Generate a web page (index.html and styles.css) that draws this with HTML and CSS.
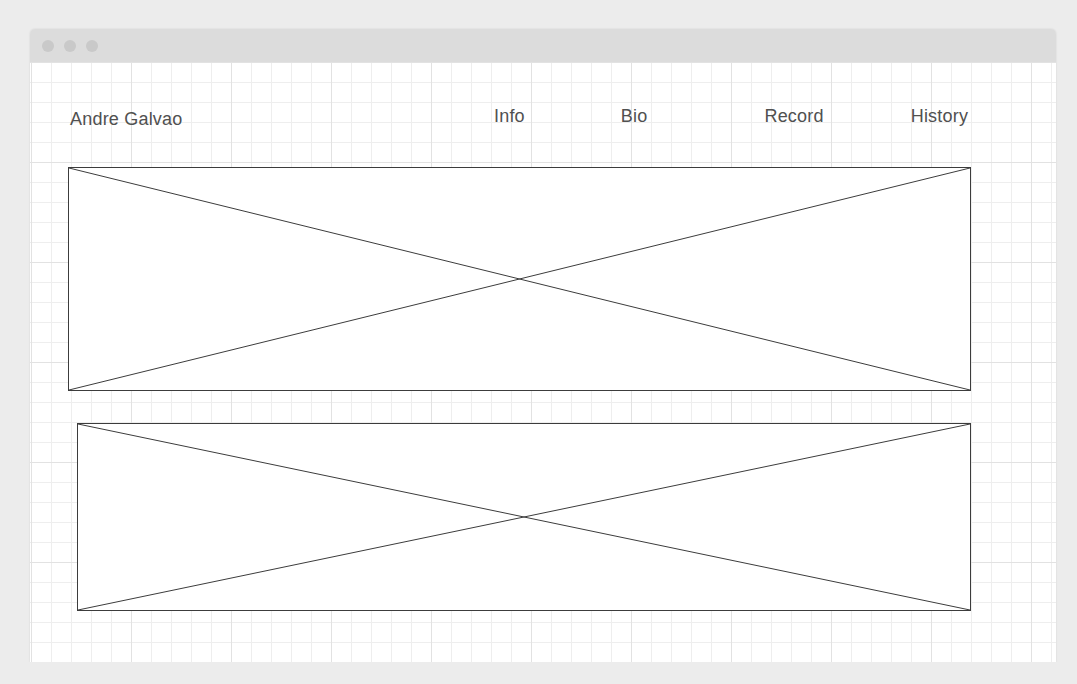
FILE: index.html
```html
<!DOCTYPE html>
<html lang="en">
<head>
    <meta charset="UTF-8">
    <meta name="viewport" content="width=device-width, initial-scale=1.0">
    <title>Andre Galvao</title>
    <link rel="stylesheet" href="styles.css">
</head>
<body>
    <div class="window">
        <div class="titlebar">
            <span class="dot"></span>
            <span class="dot"></span>
            <span class="dot"></span>
        </div>

        <div class="canvas">
            <div class="header">
                <div class="logo">Andre Galvao</div>
                <ul class="nav">
                    <li class="nav-info">Info</li>
                    <li class="nav-bio">Bio</li>
                    <li class="nav-record">Record</li>
                    <li class="nav-history">History</li>
                </ul>
            </div>

            <!-- image placeholders -->
            <div class="placeholder hero">
                <svg viewBox="0 0 100 100" preserveAspectRatio="none">
                    <line x1="0" y1="0" x2="100" y2="100" vector-effect="non-scaling-stroke"/>
                    <line x1="100" y1="0" x2="0" y2="100" vector-effect="non-scaling-stroke"/>
                </svg>
            </div>

            <div class="placeholder banner">
                <svg viewBox="0 0 100 100" preserveAspectRatio="none">
                    <line x1="0" y1="0" x2="100" y2="100" vector-effect="non-scaling-stroke"/>
                    <line x1="100" y1="0" x2="0" y2="100" vector-effect="non-scaling-stroke"/>
                </svg>
            </div>
        </div>
    </div>
</body>
</html>
```

FILE: styles.css
```css
body {
    margin: 0;
    padding: 29px 21px 0 30px;
    background: #ececec;
    font-family: "Liberation Sans", Arial, sans-serif;
    color: #505050;
}
.window {
    width: 1026px;
    height: 633px;
    display: flex;
    flex-direction: column;
    border-radius: 5px 5px 0 0;
    overflow: hidden;
    box-shadow: 0 0 2px rgba(0, 0, 0, 0.12);
}
.titlebar {
    height: 33px;
    background: #dcdcdc;
    display: flex;
    align-items: center;
    gap: 10px;
    padding-left: 12px;
    flex-shrink: 0;
}
.dot {
    width: 12px;
    height: 12px;
    border-radius: 50%;
    background: #c9c9c9;
}
.canvas {
    flex: 1;
    background-color: #fff;
    background-image:
        linear-gradient(to right, #e2e2e2 1px, transparent 1px),
        linear-gradient(to bottom, #e2e2e2 1px, transparent 1px),
        linear-gradient(to right, #eeeeee 1px, transparent 1px),
        linear-gradient(to bottom, #eeeeee 1px, transparent 1px);
    background-size: 100px 100px, 100px 100px, 20px 20px, 20px 20px;
    background-position: 1px 0, 0 0, 1px 0, 0 0;
}
.header {
    height: 105px;
    box-sizing: border-box;
    padding: 44px 0 0 40px;
    display: flex;
    align-items: flex-start;
    font-size: 18px;
    line-height: 20px;
    letter-spacing: 0.2px;
}
.logo {
    margin-top: 3px;
    width: 424px;
}
.nav {
    list-style: none;
    margin: 0;
    padding: 0;
    display: flex;
}
.nav-bio { margin-left: 96px; }
.nav-record { margin-left: 117px; }
.nav-history { margin-left: 87px; }
.placeholder {
    background: #fff;
    border: 1px solid #3c3c3c;
    box-sizing: border-box;
}
.placeholder svg {
    display: block;
    width: 100%;
    height: 100%;
}
.placeholder line {
    stroke: #3c3c3c;
    stroke-width: 1;
}
.hero {
    margin-left: 38px;
    width: 903px;
    height: 224px;
}
.banner {
    margin: 32px 0 0 47px;
    width: 894px;
    height: 188px;
}
```
